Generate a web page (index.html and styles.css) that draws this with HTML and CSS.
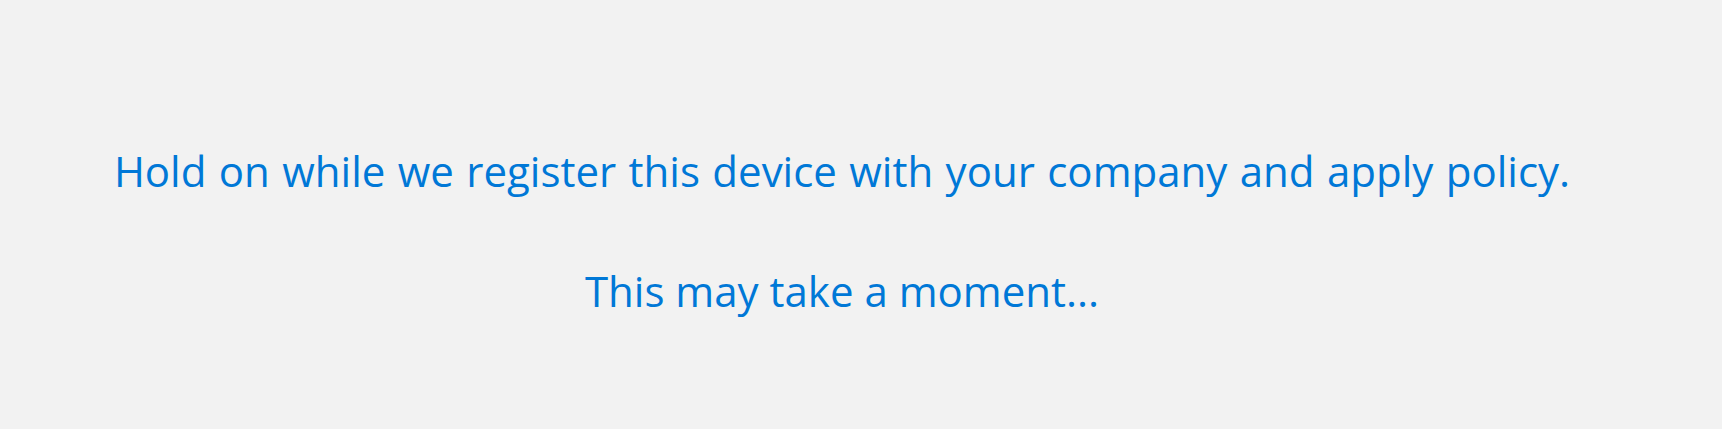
FILE: index.html
```html
<!DOCTYPE html>
<html lang="en">
<head>
  <meta charset="UTF-8" />
  <title>Setting up - Device registration</title>
  <meta name="viewport" content="width=device-width, initial-scale=1.0"/>
  <link rel="stylesheet" href="styles.css">
</head>
<body>
  <main class="progress-page">
    <p class="progress-text progress-title">Hold on while we register this device with your company and apply policy.</p>
    <p class="progress-text">This may take a moment...</p>
  </main>
</body>
</html>
```

FILE: styles.css
```css
:root {
  --page-bg: #f2f2f2;
  --accent: #0078d7;
}

body {
  margin: 0;
  padding: 0;
  background: var(--page-bg);
  font-family: 'Open Sans', 'Noto Sans', sans-serif;
  min-height: 100vh;
}

.progress-page {
  display: flex;
  flex-direction: column;
  align-items: center;
  gap: 60px;
  padding: 141px 38px 0 0;
}

.progress-text {
  margin: 0;
  color: var(--accent);
  font-size: 42px;
  font-weight: 400;
  line-height: 60px;
  white-space: nowrap;
}

.progress-title {
  word-spacing: 1.5px;
}
```
